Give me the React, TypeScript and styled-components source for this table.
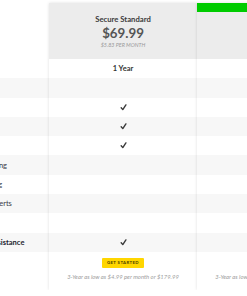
import styled, { createGlobalStyle } from "styled-components";

const GlobalStyle = createGlobalStyle`
  html, body {
    margin: 0;
    padding: 0;
    background: #fff;
    overflow: hidden;
  }
  body {
    font-family: Lato, "Open Sans", sans-serif;
  }
`;

type Value = string | boolean;

const features: { label: string; strong?: boolean; values: Value[] }[] = [
  { label: "Validity", values: ["1 Year", "1 Year"] },
  { label: "Site Seal", values: ["", true] },
  { label: "SSL Certificate", values: [true, true] },
  { label: "Firewall", values: [true, true] },
  { label: "Malware Scan", values: [true, true] },
  { label: "Malware Scanning", values: ["", true] },
  { label: "Daily Monitoring", values: ["", true] },
  { label: "SMS Security Alerts", values: ["", true] },
  { label: "CDN", values: ["", true] },
  { label: "24/7 Expert Assistance", strong: true, values: [true, true] },
];

const plans = [
  {
    id: "standard",
    name: "Secure Standard",
    price: "$69.99",
    monthly: "$5.83 PER MONTH",
    note: "3-Year as low as $4.99 per month or $179.99",
    featured: false,
  },
  {
    id: "pro",
    name: "Secure Pro",
    price: "$99.99",
    monthly: "$8.33 PER MONTH",
    note: "3-Year as low as $6.99 per month or $249.99",
    featured: true,
  },
];

const ROW_H = 19.3;

const Table = styled.div`
  display: flex;
  align-items: flex-start;
  margin-left: -111px;
  padding-top: 3px;
`;

const LabelColumn = styled.div`
  width: 160px;
  flex: none;
`;

const LabelHead = styled.div`
  height: 56px;
`;

const LabelCell = styled.div<{ $striped: boolean; $strong?: boolean }>`
  height: ${ROW_H}px;
  display: flex;
  align-items: center;
  padding-left: 58px;
  white-space: nowrap;
  font-size: 7.5px;
  font-weight: ${(p) => (p.$strong ? 700 : 400)};
  color: ${(p) => (p.$strong ? "#1c1d2e" : "#3a3b48")};
  background: ${(p) => (p.$striped ? "#f7f7f7" : "#fff")};
`;

const Plan = styled.div`
  width: 148px;
  flex: none;
  background: #fff;
  box-shadow: 0 0 3px rgba(0, 0, 0, 0.13);
  position: relative;
`;

const PlanHead = styled.div<{ $featured: boolean }>`
  box-sizing: border-box;
  height: 56px;
  background: #ececec;
  border-top: ${(p) => (p.$featured ? "9px solid #00cc00" : "none")};
  display: flex;
  flex-direction: column;
  align-items: center;
  padding-top: ${(p) => (p.$featured ? 2 : 11)}px;
`;

const PlanName = styled.div`
  font-size: 7.7px;
  line-height: 10px;
  font-weight: 700;
  color: #3b3b3b;
`;

const Price = styled.div`
  font-size: 13.3px;
  line-height: 14px;
  font-weight: 700;
  color: #555;
  margin-top: 1.5px;
`;

const Monthly = styled.div`
  font-size: 5.4px;
  line-height: 8px;
  font-style: italic;
  color: #9a9a9a;
  margin-top: 1.5px;
`;

const Cell = styled.div<{ $striped: boolean }>`
  height: ${ROW_H}px;
  display: flex;
  align-items: center;
  justify-content: center;
  font-size: 7.5px;
  font-weight: 700;
  color: #333;
  background: ${(p) => (p.$striped ? "#f7f7f7" : "#fff")};
`;

const Foot = styled.div`
  height: 38px;
  display: flex;
  flex-direction: column;
  align-items: center;
  padding-top: 6px;
  box-sizing: border-box;
`;

const Button = styled.button`
  height: 10px;
  width: 42px;
  padding: 0;
  border: none;
  border-radius: 1px;
  background: #ffd600;
  font-family: inherit;
  font-size: 4.3px;
  font-weight: 700;
  letter-spacing: 0.4px;
  color: #4a4000;
  cursor: pointer;
`;

const Note = styled.div`
  margin-top: 5px;
  font-size: 5.9px;
  line-height: 8px;
  font-style: italic;
  color: #9c9c9c;
  white-space: nowrap;
`;

function Check() {
  return (
    <svg width="7" height="7" viewBox="0 0 7 7">
      <path
        d="M1.2 3.8 L2.8 5.6 L5.9 0.9"
        fill="none"
        stroke="#3a3a3a"
        strokeWidth="1.4"
        strokeLinecap="round"
        strokeLinejoin="round"
      />
    </svg>
  );
}

function Pricing() {
  return (
    <Table>
      <LabelColumn>
        <LabelHead />
        {features.map((f, i) => (
          <LabelCell key={f.label} $striped={i % 2 === 1} $strong={f.strong}>
            {f.label}
          </LabelCell>
        ))}
      </LabelColumn>
      {plans.map((plan, p) => (
        <Plan key={plan.id}>
          <PlanHead $featured={plan.featured}>
            <PlanName>{plan.name}</PlanName>
            <Price>{plan.price}</Price>
            <Monthly>{plan.monthly}</Monthly>
          </PlanHead>
          {features.map((f, i) => {
            const v = f.values[p];
            return (
              <Cell key={f.label} $striped={i % 2 === 1}>
                {v === true ? <Check /> : v}
              </Cell>
            );
          })}
          <Foot>
            <Button>GET STARTED</Button>
            <Note>{plan.note}</Note>
          </Foot>
        </Plan>
      ))}
    </Table>
  );
}

export default function App() {
  return (
    <>
      <GlobalStyle />
      <Pricing />
    </>
  );
}
